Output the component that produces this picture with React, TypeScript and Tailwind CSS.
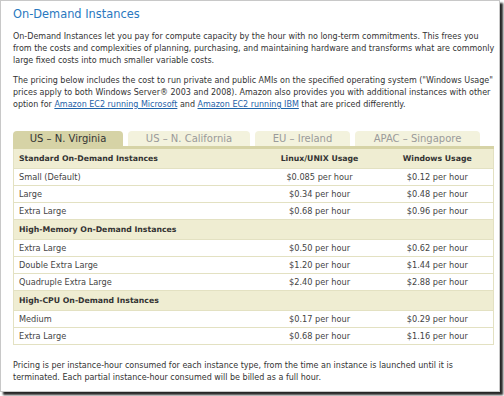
import React from 'react';

const rows: { type: 'head' | 'row'; name: string; linux?: string; win?: string }[] = [
  { type: 'row', name: 'Small (Default)', linux: '$0.085 per hour', win: '$0.12 per hour' },
  { type: 'row', name: 'Large', linux: '$0.34 per hour', win: '$0.48 per hour' },
  { type: 'row', name: 'Extra Large', linux: '$0.68 per hour', win: '$0.96 per hour' },
  { type: 'head', name: 'High-Memory On-Demand Instances' },
  { type: 'row', name: 'Extra Large', linux: '$0.50 per hour', win: '$0.62 per hour' },
  { type: 'row', name: 'Double Extra Large', linux: '$1.20 per hour', win: '$1.44 per hour' },
  { type: 'row', name: 'Quadruple Extra Large', linux: '$2.40 per hour', win: '$2.88 per hour' },
  { type: 'head', name: 'High-CPU On-Demand Instances' },
  { type: 'row', name: 'Medium', linux: '$0.17 per hour', win: '$0.29 per hour' },
  { type: 'row', name: 'Extra Large', linux: '$0.68 per hour', win: '$1.16 per hour' },
];

const tabs = [
  { label: 'US – N. Virginia', w: 'w-[110px]', active: true },
  { label: 'US – N. California', w: 'w-[122px]', active: false },
  { label: 'EU – Ireland', w: 'w-[95px]', active: false },
  { label: 'APAC – Singapore', w: 'w-[125px]', active: false },
];

const Link = ({ children }: { children: React.ReactNode }) => (
  <a href="#" className="text-[#1f63a8] underline decoration-[#1f63a8]">{children}</a>
);

export default function App() {
  return (
    <div className="w-[504px] h-[396px] bg-white overflow-hidden" style={{ fontFamily: '"DejaVu Sans", Verdana, sans-serif' }}>
      <div className="w-[500px] h-[392px] bg-white border border-[#c8c8c8] shadow-[3px_3px_2px_rgba(0,0,0,0.85)] pl-[12px] pt-[6px] text-[#333] text-[8px] leading-[12px]">
        {/* titre */}
        <h1 className="text-[11.4px] leading-[14px] text-[#2a78c0]">On-Demand Instances</h1>

        <p className="mt-[10px] whitespace-nowrap">
          On-Demand Instances let you pay for compute capacity by the hour with no long-term commitments. This frees you<br />
          from the costs and complexities of planning, purchasing, and maintaining hardware and transforms what are commonly<br />
          large fixed costs into much smaller variable costs.
        </p>

        <p className="mt-[8px] whitespace-nowrap">
          The pricing below includes the cost to run private and public AMIs on the specified operating system ("Windows Usage"<br />
          prices apply to both Windows Server® 2003 and 2008). Amazon also provides you with additional instances with other<br />
          option for <Link>Amazon EC2 running Microsoft</Link> and <Link>Amazon EC2 running IBM</Link> that are priced differently.
        </p>

        {/* onglets */}
        <div className="mt-[20px] flex gap-[5px] h-[15px]">
          {tabs.map((t) => (
            <div
              key={t.label}
              className={`${t.w} h-full rounded-t-[4px] flex items-center justify-center text-[10px] leading-none ${
                t.active ? 'bg-[#d6d3a6] text-[#333]' : 'bg-[#f3f2dd] text-[#9a9a9a]'
              }`}
            >
              {t.label}
            </div>
          ))}
        </div>

        <table className="w-[480px] border-collapse border-t-[3px] border-t-[#d6d3a6] table-fixed">
          <colgroup>
            <col className="w-[244px]" />
            <col className="w-[124px]" />
            <col className="w-[112px]" />
          </colgroup>
          <tbody>
            <tr className="h-[21px] bg-[#efedd2] font-bold text-[7.75px] text-[#333]">
              <td className="pl-[5px] border-b border-l border-[#e3e1c2]">Standard On-Demand Instances</td>
              <td className="text-center border-b border-[#e3e1c2]">Linux/UNIX Usage</td>
              <td className="text-center border-b border-r border-[#e3e1c2]">Windows Usage</td>
            </tr>
            {rows.map((r, i) =>
              r.type === 'head' ? (
                <tr key={i} className="h-[20px] bg-[#efedd2] font-bold text-[7.75px]">
                  <td colSpan={3} className="pl-[5px] border border-[#e3e1c2]">{r.name}</td>
                </tr>
              ) : (
                <tr key={i} className="h-[17px] bg-white text-[8.2px] text-[#444]">
                  <td className="pl-[5px] border-y border-l border-[#e3e1c2]">{r.name}</td>
                  <td className="text-center border-y border-[#e3e1c2]">{r.linux}</td>
                  <td className="text-center border-y border-r border-[#e3e1c2]">{r.win}</td>
                </tr>
              )
            )}
          </tbody>
        </table>

        <p className="mt-[15px] whitespace-nowrap">
          Pricing is per instance-hour consumed for each instance type, from the time an instance is launched until it is<br />
          terminated. Each partial instance-hour consumed will be billed as a full hour.
        </p>
      </div>
    </div>
  );
}
